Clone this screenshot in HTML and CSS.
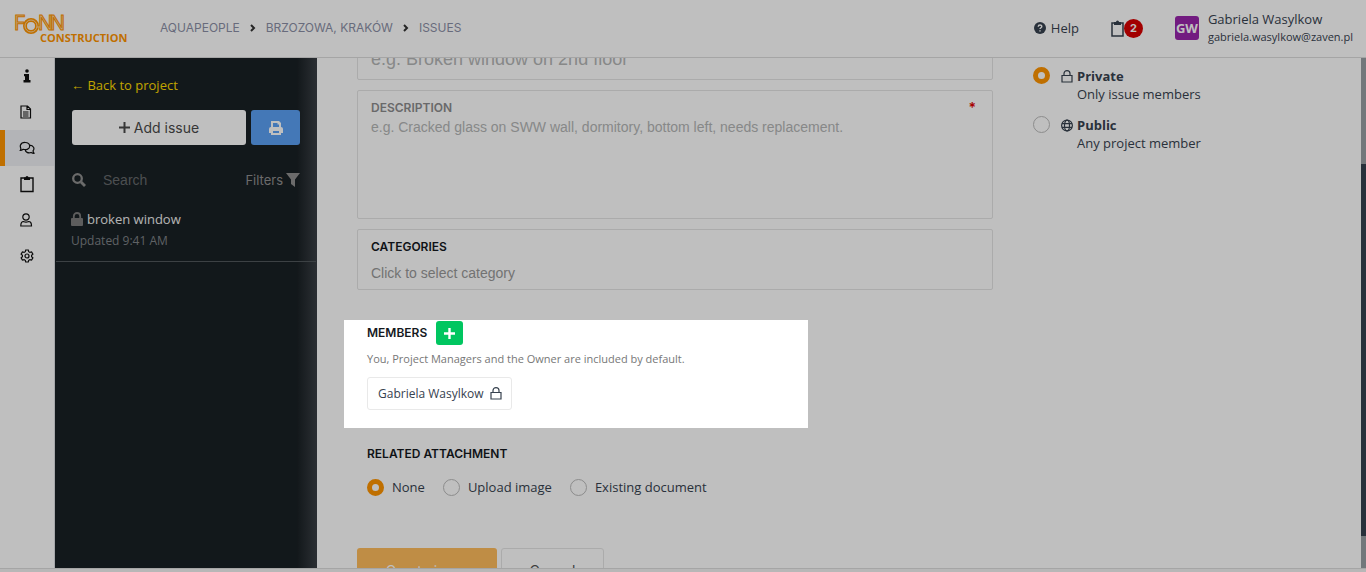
FILE: index.html
```html
<!DOCTYPE html>
<html lang="en">
<head>
    <meta charset="UTF-8">
    <meta name="viewport" content="width=device-width, initial-scale=1.0">
    <title>Fonn Construction - New issue</title>
    <link rel="stylesheet" href="styles.css">
</head>
<body>
    <header class="topbar">
        <a class="logo" href="#" aria-label="Fonn Construction">
            <svg width="114" height="32" viewBox="0 0 114 32">
                <g class="logo-mark">
                    <text x="0" y="18">F</text>
                    <text x="24" y="18">N</text>
                    <text x="36" y="18">N</text>
                </g>
                <circle class="ring" cx="17" cy="14" r="6"/>
                <circle class="ring-inner" cx="17" cy="14" r="6"/>
                <path class="ring-inner" d="M23 15h3"/>
                <text class="logo-name" x="26" y="30">CONSTRUCTION</text>
            </svg>
        </a>
        <nav class="breadcrumbs">
            <a href="#">Aquapeople</a>
            <svg width="6" height="8" viewBox="0 0 6 8"><path d="M1 1l3 3-3 3"/></svg>
            <a href="#">Brzozowa, Kraków</a>
            <svg width="6" height="8" viewBox="0 0 6 8"><path d="M1 1l3 3-3 3"/></svg>
            <a href="#">Issues</a>
        </nav>
        <a class="help" href="#">
            <svg width="12" height="12" viewBox="0 0 12 12">
                <circle cx="6" cy="6" r="6" fill="currentColor"/>
                <path d="M4.2 4.700C4.300 2.400 7.800 2.500 7.800 4.500 7.800 5.800 6 5.700 6 7.100M6 8.200v1.400" fill="none" stroke="#fff" stroke-width="1.400"/>
            </svg>
            Help
        </a>
        <button class="tasks" type="button" aria-label="Tasks">
            <svg width="13" height="17" viewBox="0 0 13 17">
                <path d="M1 3h11v13H1z" fill="none" stroke="currentColor" stroke-width="1.500"/>
                <path d="M3 5V2h2a1.500 1.500 0 0 1 3 0h2v3z" fill="currentColor"/>
            </svg>
            <span class="badge">2</span>
        </button>
        <a class="user" href="#">
            <span class="avatar">GW</span>
            <span class="user-text">
                <span class="user-name">Gabriela Wasylkow</span>
                <span class="user-email">gabriela.wasylkow@zaven.pl</span>
            </span>
        </a>
    </header>

    <div class="workspace">
        <nav class="rail">
            <a href="#" aria-label="Info">
                <svg width="14" height="14" viewBox="0 0 14 14" fill="currentColor"><circle cx="7" cy="2" r="1.800"/><path d="M4 5h5v6h1.500v2.500h-7V11H5V7.200H4z"/></svg>
            </a>
            <a href="#" aria-label="Documents">
                <svg width="14" height="14" viewBox="0 0 14 14" class="line"><path d="M1 1h6.500L10.500 4V13H1zM7 1v3.500h3.500M3 7h5.500M3 9h5.500M3 11h5.500"/></svg>
            </a>
            <a href="#" class="active" aria-label="Issues">
                <svg width="16" height="14" viewBox="0 0 16 14" class="line"><path d="M1.300 9.500C3 6.800.5 6.800 1.500 4 2.800.5 10 .6 10.600 4.500 11.200 8 7 9.300 4.200 8.300 3 9.200 2.200 9.500 1.300 9.500zM10.700 4.200C14.500 4.500 16 7.500 14 9.800 14 11 15.300 12.500 15 12.500 13.500 12.500 12.800 12 12 11.500 9 12.500 6.500 11 6.200 8.800"/></svg>
            </a>
            <a href="#" aria-label="Tasks">
                <svg width="14" height="18" viewBox="0 0 14 18"><path d="M1 3h12v13.500H1z" fill="none" stroke="currentColor" stroke-width="1.400"/><path d="M4 5V2.500h1.500a1.500 1.500 0 0 1 3 0H10V5z" fill="currentColor"/></svg>
            </a>
            <a href="#" aria-label="People">
                <svg width="14" height="14" viewBox="0 0 14 14" class="line"><circle cx="6" cy="4" r="3.200"/><path d="M3.500 8.500C1.500 8.500.8 10 .8 13h10.700c0-3-.8-4.500-3-4.500-1.500.8-3.500.8-5 0z"/></svg>
            </a>
            <a href="#" aria-label="Settings">
                <svg width="14" height="14" viewBox="0 0 14 14" class="line"><circle cx="7" cy="7" r="2"/><path d="M5.700 1h2.600l.4 1.700 1.200.7 1.700-.5 1.300 2.200L11.600 6.300v1.400l1.300 1.200-1.300 2.200-1.700-.5-1.200.7-.4 1.700H5.700l-.4-1.700-1.200-.7-1.700.5-1.300-2.200 1.300-1.200V6.300L1.100 5.100l1.300-2.200 1.700.5 1.200-.7z"/></svg>
            </a>
        </nav>

        <aside class="issues">
            <a class="back" href="#">← Back to project</a>
            <div class="issue-actions">
                <button class="add" type="button">
                    <svg width="11" height="11" viewBox="0 0 11 11"><path d="M5.500 0v11M0 5.500h11" stroke="currentColor" stroke-width="2"/></svg>
                    Add issue
                </button>
                <button class="print" type="button" aria-label="Print">
                    <svg width="14" height="14" viewBox="0 0 14 14"><path d="M2 0h8l2 2v4a2 2 0 0 1 2 2v4h-2v2H2v-2H0V8a2 2 0 0 1 2-2zm2 2v4h6V3.500H8.500V2zm0 8v2h6v-2z" fill="#fff" fill-rule="evenodd"/></svg>
                </button>
            </div>
            <div class="search">
                <svg width="14" height="14" viewBox="0 0 14 14"><circle cx="5.500" cy="5.500" r="4.300" fill="none" stroke="currentColor" stroke-width="2.300"/><path d="M9 9l4 4" stroke="currentColor" stroke-width="2.800"/></svg>
                <input type="text" placeholder="Search" aria-label="Search">
                <button class="filters" type="button">
                    Filters
                    <svg width="14" height="14" viewBox="0 0 14 14"><path d="M0 0h14L9 6.500V14l-4-3V6.500z" fill="currentColor"/></svg>
                </button>
            </div>
            <a class="issue" href="#">
                <span class="issue-title">
                    <svg width="12" height="14" viewBox="0 0 12 14"><rect y="6" width="12" height="8" rx="1" fill="currentColor"/><path d="M2.800 6.500V4.200a3.200 3.200 0 0 1 6.400 0v2.300" fill="none" stroke="currentColor" stroke-width="1.800"/></svg>
                    broken window
                </span>
                <span class="issue-date">Updated 9:41 AM</span>
            </a>
        </aside>

        <main class="content">
            <form class="issue-form">
                <div class="field">
                    <label class="label" for="title">Title</label>
                    <input class="title-input" id="title" type="text" placeholder="e.g. Broken window on 2nd floor">
                </div>
                <div class="field description">
                    <label class="label muted" for="description">Description <span class="required">*</span></label>
                    <textarea id="description" placeholder="e.g. Cracked glass on SWW wall, dormitory, bottom left, needs replacement."></textarea>
                </div>
                <div class="field categories">
                    <label class="label" for="categories">Categories</label>
                    <input id="categories" type="text" placeholder="Click to select category">
                </div>

                <section class="members">
                    <div class="members-head">
                        <h2 class="label">Members</h2>
                        <button class="add-member" type="button" aria-label="Add member">
                            <svg width="11" height="11" viewBox="0 0 11 11"><path d="M5.500 0v11M0 5.500h11" stroke="#fff" stroke-width="2.400"/></svg>
                        </button>
                    </div>
                    <p class="hint">You, Project Managers and the Owner are included by default.</p>
                    <div class="member">
                        Gabriela Wasylkow
                        <svg width="12" height="13" viewBox="0 0 12 13" class="line"><path d="M1 5.500h10V12H1zM3 5.500V3.600a3 3 0 0 1 6 0v1.900"/></svg>
                    </div>
                </section>

                <fieldset class="attachment">
                    <legend class="label">Related attachment</legend>
                    <div class="choices">
                        <label><input type="radio" name="attachment" checked>None</label>
                        <label><input type="radio" name="attachment">Upload image</label>
                        <label><input type="radio" name="attachment">Existing document</label>
                    </div>
                </fieldset>

                <div class="form-actions">
                    <button class="create" type="submit">Create issue</button>
                    <button class="cancel" type="button">Cancel</button>
                </div>
            </form>

            <div class="privacy">
                <label class="option">
                    <input type="radio" name="privacy" checked>
                    <svg width="12" height="13" viewBox="0 0 12 13" class="line"><path d="M1 5.500h10V12H1zM3 5.500V3.600a3 3 0 0 1 6 0v1.900"/></svg>
                    <span><b>Private</b><br>Only issue members</span>
                </label>
                <label class="option">
                    <input type="radio" name="privacy">
                    <svg width="12" height="13" viewBox="0 0 12 13" class="line"><circle cx="6" cy="6.500" r="5.400"/><ellipse cx="6" cy="6.500" rx="2.500" ry="5.400"/><path d="M1 4.700h10M1 8.300h10"/></svg>
                    <span><b>Public</b><br>Any project member</span>
                </label>
            </div>
        </main>
        <div class="scrollbar"><div class="thumb"></div></div>
    </div>
    <footer class="bottom"></footer>

    <div class="spotlight"></div>
</body>
</html>
```

FILE: styles.css
```css
* {
    box-sizing: border-box;
}
body {
    margin: 0;
    height: 100vh;
    display: flex;
    flex-direction: column;
    position: relative;
    overflow: hidden;
    background: #fff;
    color: #37424f;
    font: 13px/18px "Open Sans", "Noto Sans", sans-serif;
}
a {
    color: inherit;
    text-decoration: none;
}
button, input, textarea {
    font: inherit;
    color: inherit;
    margin: 0;
    padding: 0;
    border: 0;
    background: none;
}
button {
    cursor: pointer;
}
svg {
    flex: none;
}
.line {
    fill: none;
    stroke: currentColor;
    stroke-width: 1.2;
}

/* Top bar */
.topbar {
    height: 58px;
    flex: none;
    display: flex;
    align-items: center;
    padding: 0 13px 1px 14px;
    border-bottom: 1px solid #dcdcdc;
}
.logo {
    display: flex;
    width: 146px;
}
.logo-mark {
    fill: #ffd9a0;
    stroke: #ff9500;
    stroke-width: 1;
    font: 20px Inter, sans-serif;
}
.ring {
    fill: none;
    stroke: #ff9500;
    stroke-width: 4;
}
.ring-inner {
    fill: none;
    stroke: #ffd9a0;
    stroke-width: 1;
}
.logo-name {
    fill: #ff9500;
    font: bold 11px "Open Sans", sans-serif;
}
.breadcrumbs {
    flex: 1;
    display: flex;
    align-items: center;
    gap: 10px;
    font: 12px/16px Inter, sans-serif;
    text-transform: uppercase;
    color: #8b8fa6;
}
.breadcrumbs svg {
    fill: none;
    stroke: #333;
    stroke-width: 2;
}
.help {
    display: flex;
    align-items: center;
    gap: 5px;
    margin-right: 32px;
}
.tasks {
    display: flex;
    align-items: center;
    margin-right: 32px;
}
.badge {
    width: 19px;
    height: 19px;
    border-radius: 50%;
    background: #d90000;
    color: #fff;
    font: bold 11px/19px Inter, sans-serif;
}
.user {
    display: flex;
    align-items: center;
    gap: 9px;
}
.avatar {
    width: 24px;
    height: 24px;
    border-radius: 3px;
    background: #9825ab;
    color: #fff;
    font-weight: bold;
    line-height: 24px;
    text-align: center;
}
.user-text {
    display: flex;
    flex-direction: column;
}
.user-email {
    font-size: 11px;
}

.workspace {
    flex: 1;
    min-height: 0;
    display: flex;
}
.rail {
    width: 55px;
    flex: none;
    border-right: 1px solid #dcdfe3;
    color: #111;
}
.rail a {
    height: 36px;
    display: flex;
    align-items: center;
    justify-content: center;
    border-left: 5px solid transparent;
    padding-right: 5px;
}
.rail .active {
    background: #eff1f4;
    border-color: #ff9500;
}

/* Issue list */
.issues {
    width: 262px;
    flex: none;
    padding-top: 18px;
    background: linear-gradient(to left, #3a3f45, #192024 20px);
    color: #8f8f8f;
}
.back {
    display: block;
    padding: 0 16px;
    color: #ffdc00;
}
.issue-actions {
    display: flex;
    gap: 5px;
    padding: 16px 17px 0;
}
.add, .print {
    height: 35px;
    border-radius: 3px;
}
.add {
    flex: 1;
    display: flex;
    align-items: center;
    justify-content: center;
    gap: 4px;
    background: #fff;
    color: #4a4a4a;
    font: 14px/18px Inter, sans-serif;
}
.print {
    width: 49px;
    display: flex;
    align-items: center;
    justify-content: center;
    background: #5ba0f5;
}
.search {
    display: flex;
    align-items: center;
    padding: 25px 17px 0;
}
.search input {
    flex: 1;
    min-width: 0;
    margin-left: 17px;
    font: 14px/20px "Liberation Sans", sans-serif;
}
.search input::placeholder {
    color: #666a6d;
}
.filters {
    display: flex;
    align-items: center;
    gap: 3px;
    font: 13px/20px Inter, sans-serif;
}
.issue {
    display: flex;
    flex-direction: column;
    gap: 4px;
    margin: 20px 1px 0;
    padding: 0 15px 11px;
    border-bottom: 1px solid #51575b;
}
.issue-title {
    display: flex;
    align-items: center;
    gap: 4px;
    color: #f0f0f0;
}
.issue-title svg {
    color: #7c7c7c;
}
.issue-date {
    font-size: 12px;
    color: #7f8387;
}

/* Form */
.content {
    flex: 1;
    min-width: 0;
    display: flex;
    align-items: flex-start;
    overflow: hidden;
    padding-left: 40px;
}
.issue-form {
    flex: 1;
    margin-top: -39px; /* scrolled down past the title */
}
.label {
    display: flex;
    justify-content: space-between;
    margin: 0;
    padding: 0;
    font: 600 12px/14px Inter, sans-serif;
    text-transform: uppercase;
    color: #15191e;
}
.muted {
    color: #8c8c8e;
}
.field {
    padding: 10px 16px 7px 13px;
    margin-bottom: 10px;
    border: 1px solid #e4e4e4;
    border-radius: 2px;
}
.field input, .field textarea {
    display: block;
    width: 100%;
    margin-top: 2px;
    resize: none;
    font: 14px/20px "Liberation Sans", sans-serif;
}
.field ::placeholder {
    color: #b4b6b6;
}
.field .title-input {
    font-size: 18px;
    line-height: 26px;
}
.description textarea {
    height: 94px;
}
.required {
    color: #e00000;
    font-size: 14px;
}
.categories {
    padding-bottom: 6px;
}
.categories input {
    margin-top: 9px;
}
.categories ::placeholder {
    color: #999;
}
.members {
    margin: 31px 10px 0;
}
.members-head {
    display: flex;
    align-items: center;
    gap: 9px;
}
.add-member {
    display: flex;
    align-items: center;
    justify-content: center;
    width: 27px;
    height: 24px;
    border-radius: 3px;
    background: #00c660;
}
.hint {
    margin: 4px 0 8px;
    font-size: 11px;
    line-height: 20px;
    color: #777;
}
.member {
    display: inline-flex;
    align-items: center;
    gap: 6px;
    height: 33px;
    padding: 0 9px 0 10px;
    border: 1px solid #e9e9e9;
    border-radius: 3px;
    font-size: 12px;
}
.attachment {
    margin: 37px 10px 0;
    padding: 0;
    border: 0;
}
.choices {
    display: flex;
    gap: 18px;
    padding-top: 17px;
}
.choices label {
    display: flex;
    align-items: center;
    gap: 8px;
}
input[type="radio"] {
    appearance: none;
    flex: none;
    width: 17px;
    height: 17px;
    border: 1px solid #bbb;
    border-radius: 50%;
}
input[type="radio"]:checked {
    border: 5px solid #ff9500;
}
.form-actions {
    display: flex;
    gap: 4px;
    margin-top: 52px;
}
.create, .cancel {
    height: 46px;
    border-radius: 3px;
    font: 14px/18px Inter, sans-serif;
}
.create {
    width: 140px;
    background: #ffbc5c;
    color: #fff;
}
.cancel {
    width: 103px;
    border: 1px solid #e4e4e4;
    color: #555;
}

/* Who can see the issue */
.privacy {
    width: 368px;
    padding: 9px 0 0 40px;
}
.option {
    display: flex;
    align-items: flex-start;
    margin-bottom: 13px;
}
.option svg {
    margin: 3px 4px 0 11px;
}

.scrollbar {
    width: 5px;
    flex: none;
    padding-top: 106px;
    background: #989fa4;
}
.thumb {
    height: 92%;
    background: #35414f;
}
.bottom {
    height: 4px;
    flex: none;
    border-top: 1px solid #dcdcdc;
    background: #f4f4f4;
}

/* Tour highlight, dims everything around the members section */
.spotlight {
    position: absolute;
    top: 320px;
    left: 344px;
    width: 464px;
    height: 108px;
    box-shadow: 0 0 0 9999px rgba(0, 0, 0, 0.25);
    pointer-events: none;
}
```
